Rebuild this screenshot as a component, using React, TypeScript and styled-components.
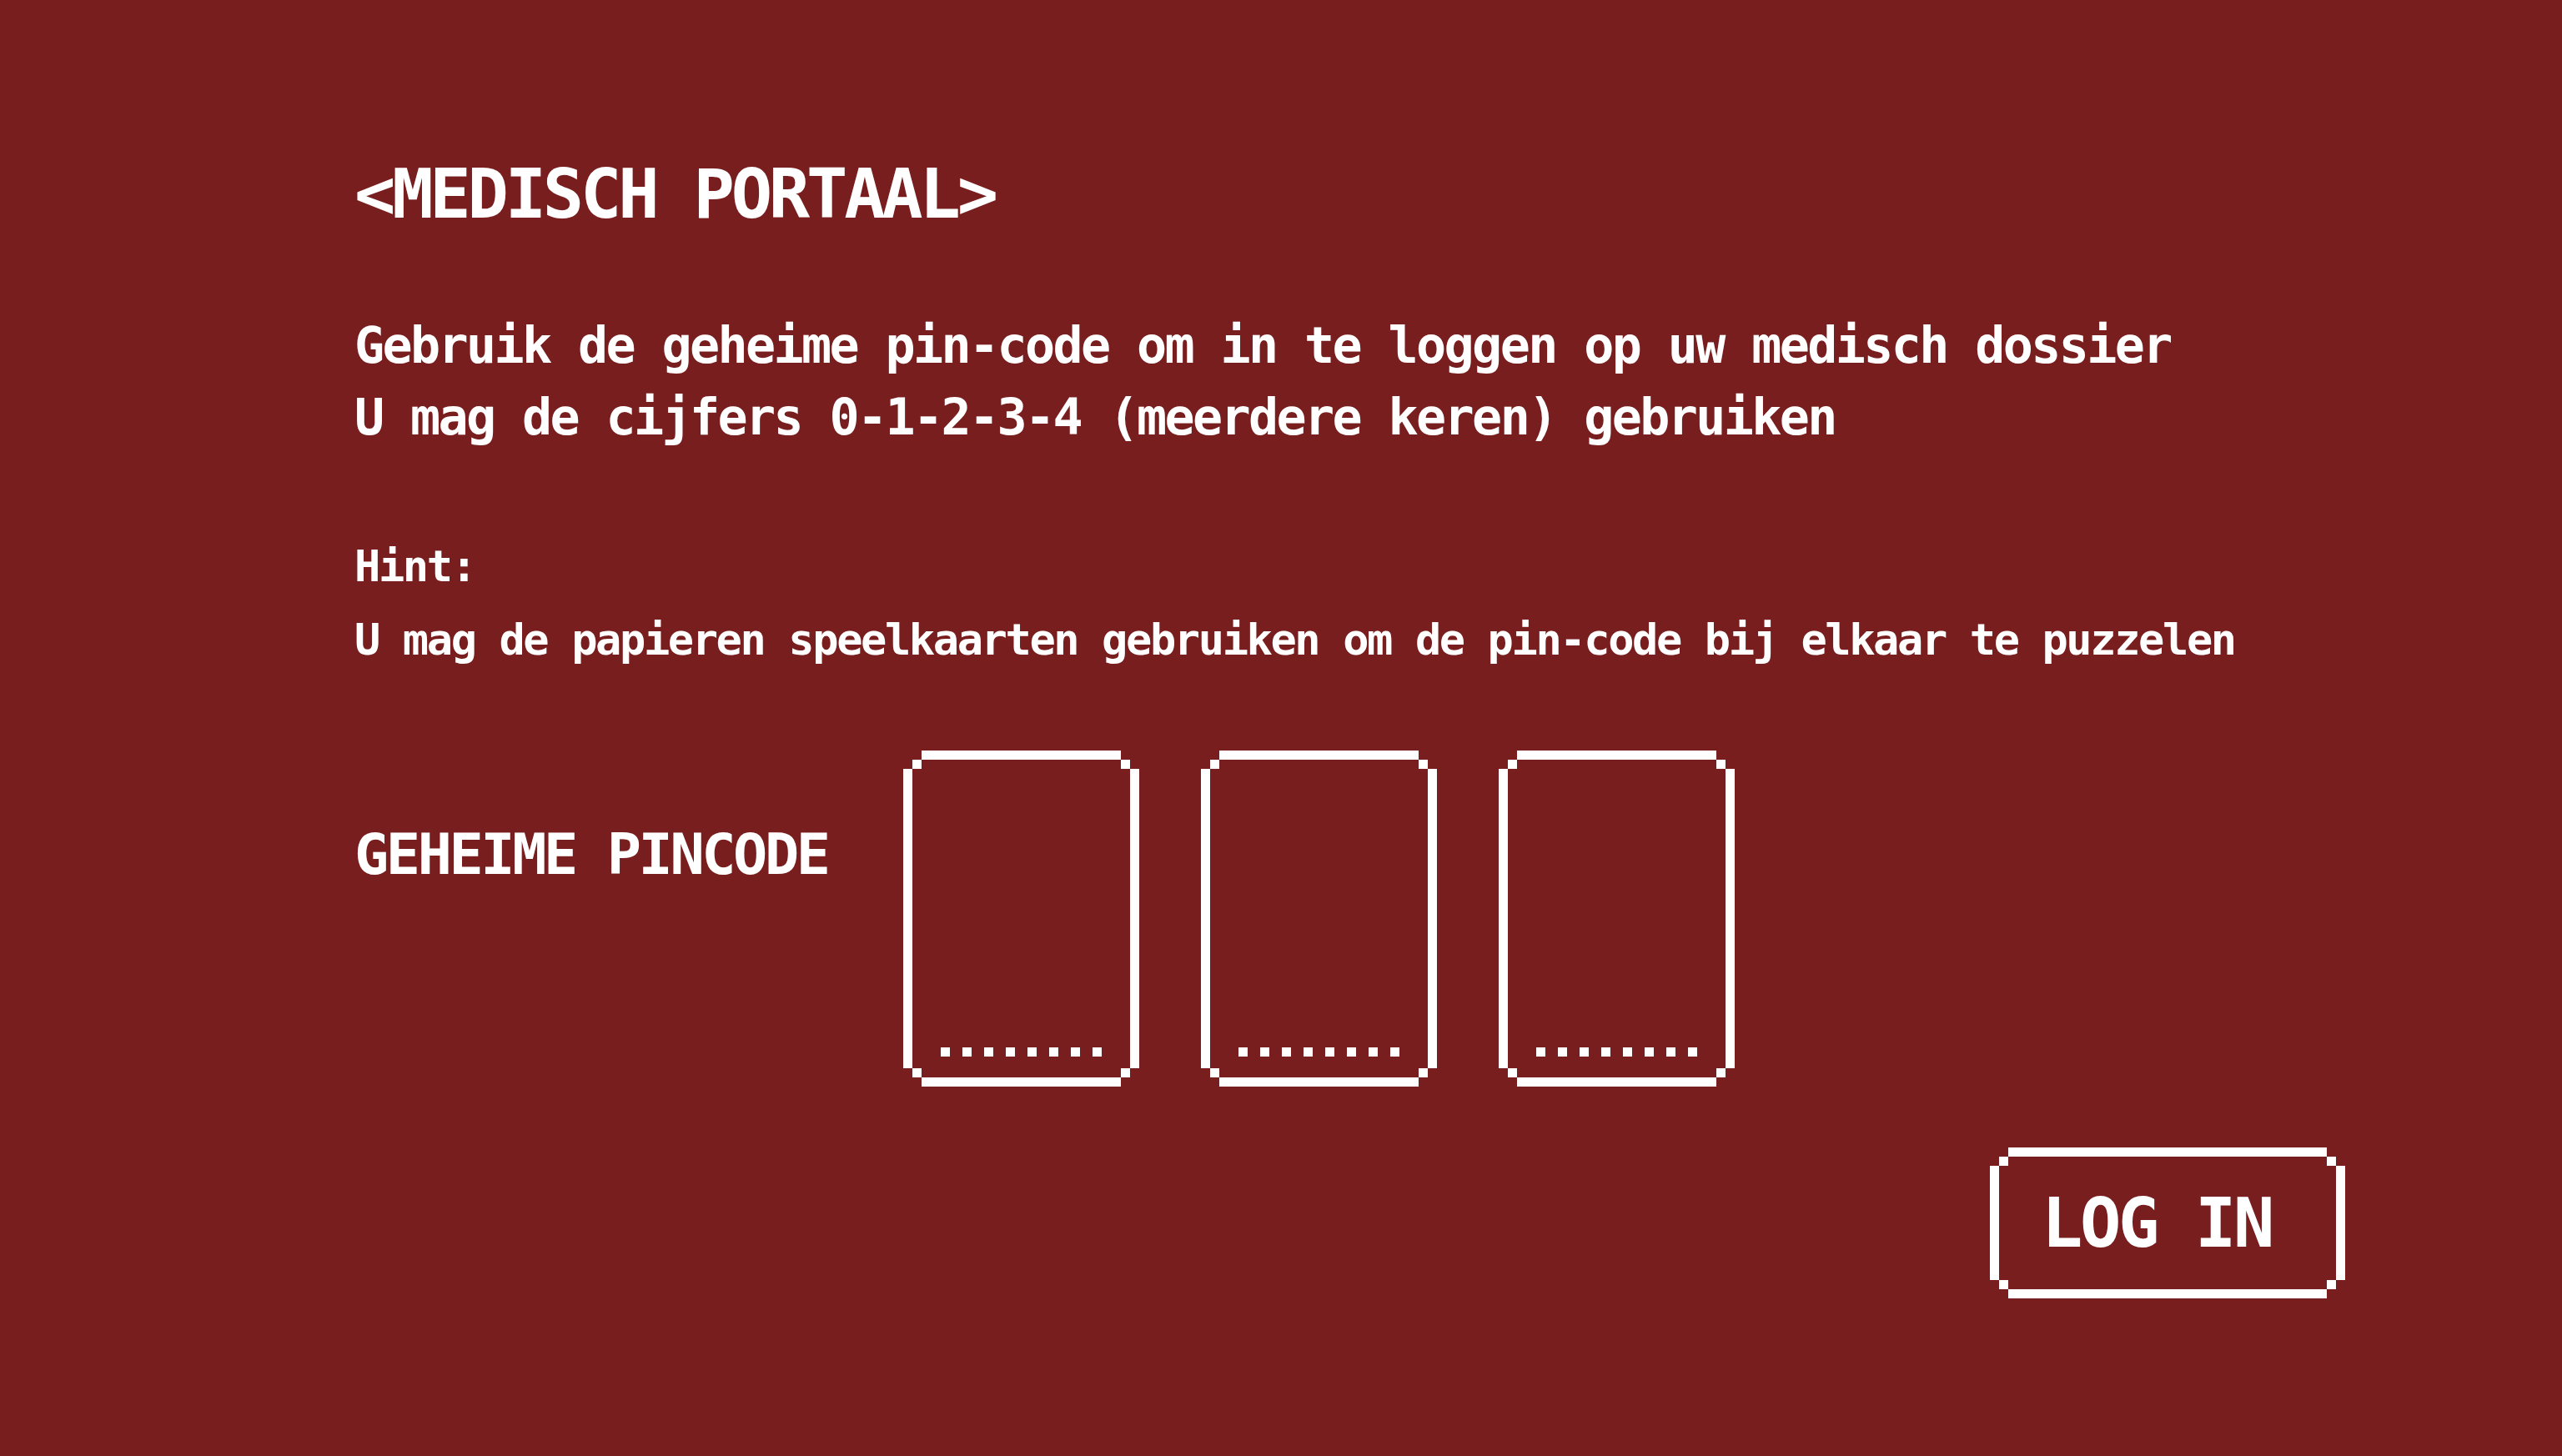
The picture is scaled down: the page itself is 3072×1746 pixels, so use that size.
import React from "react";
import styled, { createGlobalStyle, css } from "styled-components";

// pixel unit used by the blocky frames
const UNIT = 11;

const GlobalStyle = createGlobalStyle`
  html, body {
    margin: 0;
    padding: 0;
    background: #781e1f;
  }
  body {
    font-family: "DejaVu Sans Mono", "Liberation Mono", monospace;
    font-weight: 700;
    color: #fff;
  }
`;

// stepped "pixel" border drawn with background layers
const pixelFrame = (u: number) => css`
  background:
    linear-gradient(#fff, #fff) ${2 * u}px 0 / calc(100% - ${4 * u}px) ${u}px no-repeat,
    linear-gradient(#fff, #fff) ${2 * u}px 100% / calc(100% - ${4 * u}px) ${u}px no-repeat,
    linear-gradient(#fff, #fff) 0 ${2 * u}px / ${u}px calc(100% - ${4 * u}px) no-repeat,
    linear-gradient(#fff, #fff) 100% ${2 * u}px / ${u}px calc(100% - ${4 * u}px) no-repeat,
    linear-gradient(#fff, #fff) ${u}px ${u}px / ${u}px ${u}px no-repeat,
    linear-gradient(#fff, #fff) calc(100% - ${u}px) ${u}px / ${u}px ${u}px no-repeat,
    linear-gradient(#fff, #fff) ${u}px calc(100% - ${u}px) / ${u}px ${u}px no-repeat,
    linear-gradient(#fff, #fff) calc(100% - ${u}px) calc(100% - ${u}px) / ${u}px ${u}px no-repeat;
`;

const Page = styled.main`
  min-height: 100vh;
  box-sizing: border-box;
  padding: 192px 260px 0 425px;
  display: flex;
  flex-direction: column;
`;

const Title = styled.h1`
  margin: 0;
  font-size: 82px;
  line-height: 82px;
  font-weight: 700;
  letter-spacing: -4.2px;
  white-space: nowrap;
`;

const Intro = styled.p`
  margin: 97px 0 0;
  font-size: 60px;
  line-height: 86px;
  letter-spacing: -2.62px;
  white-space: nowrap;
`;

const Hint = styled.div`
  margin-top: 92px;
  font-size: 52px;
  line-height: 88px;
  letter-spacing: -2.4px;
  white-space: nowrap;
`;

const PinRow = styled.div`
  display: flex;
  align-items: flex-start;
  margin-top: 89px;
`;

const PinLabel = styled.label`
  margin: 84px 90px 0 0;
  font-size: 68.5px;
  line-height: 80px;
  letter-spacing: -3.4px;
  white-space: nowrap;
`;

const PinBoxes = styled.div`
  display: flex;
  gap: 74px;
`;

const PinBox = styled.div<{ $unit: number }>`
  ${(p) => pixelFrame(p.$unit)}
  width: 283px;
  height: 403px;
  box-sizing: border-box;
  padding-bottom: 36px;
  display: flex;
  align-items: flex-end;
  justify-content: center;
`;

const Dots = styled.div`
  display: flex;
  gap: 15px;
`;

const Dot = styled.span`
  width: 11px;
  height: 11px;
  background: #fff;
`;

const LoginButton = styled.button<{ $unit: number }>`
  ${(p) => pixelFrame(p.$unit)}
  align-self: flex-end;
  margin-top: 73px;
  width: 426px;
  height: 181px;
  padding: 0 26px 0 0;
  border: none;
  font-family: inherit;
  font-weight: 700;
  font-size: 82px;
  line-height: 82px;
  letter-spacing: -3.36px;
  color: #fff;
  cursor: pointer;
`;

const PIN_SLOTS = 3;
const DOT_COUNT = 8;

export default function App() {
  return (
    <>
      <GlobalStyle />
      <Page>
        <Title>&lt;MEDISCH PORTAAL&gt;</Title>
        <Intro>
          Gebruik de geheime pin-code om in te loggen op uw medisch dossier
          <br />
          U mag de cijfers 0-1-2-3-4 (meerdere keren) gebruiken
        </Intro>
        <Hint>
          Hint:
          <br />
          U mag de papieren speelkaarten gebruiken om de pin-code bij elkaar te puzzelen
        </Hint>
        <PinRow>
          <PinLabel>GEHEIME PINCODE</PinLabel>
          <PinBoxes>
            {Array.from({ length: PIN_SLOTS }).map((_, i) => (
              <PinBox key={i} $unit={UNIT}>
                <Dots>
                  {Array.from({ length: DOT_COUNT }).map((__, j) => (
                    <Dot key={j} />
                  ))}
                </Dots>
              </PinBox>
            ))}
          </PinBoxes>
        </PinRow>
        <LoginButton $unit={UNIT}>LOG IN</LoginButton>
      </Page>
    </>
  );
}
